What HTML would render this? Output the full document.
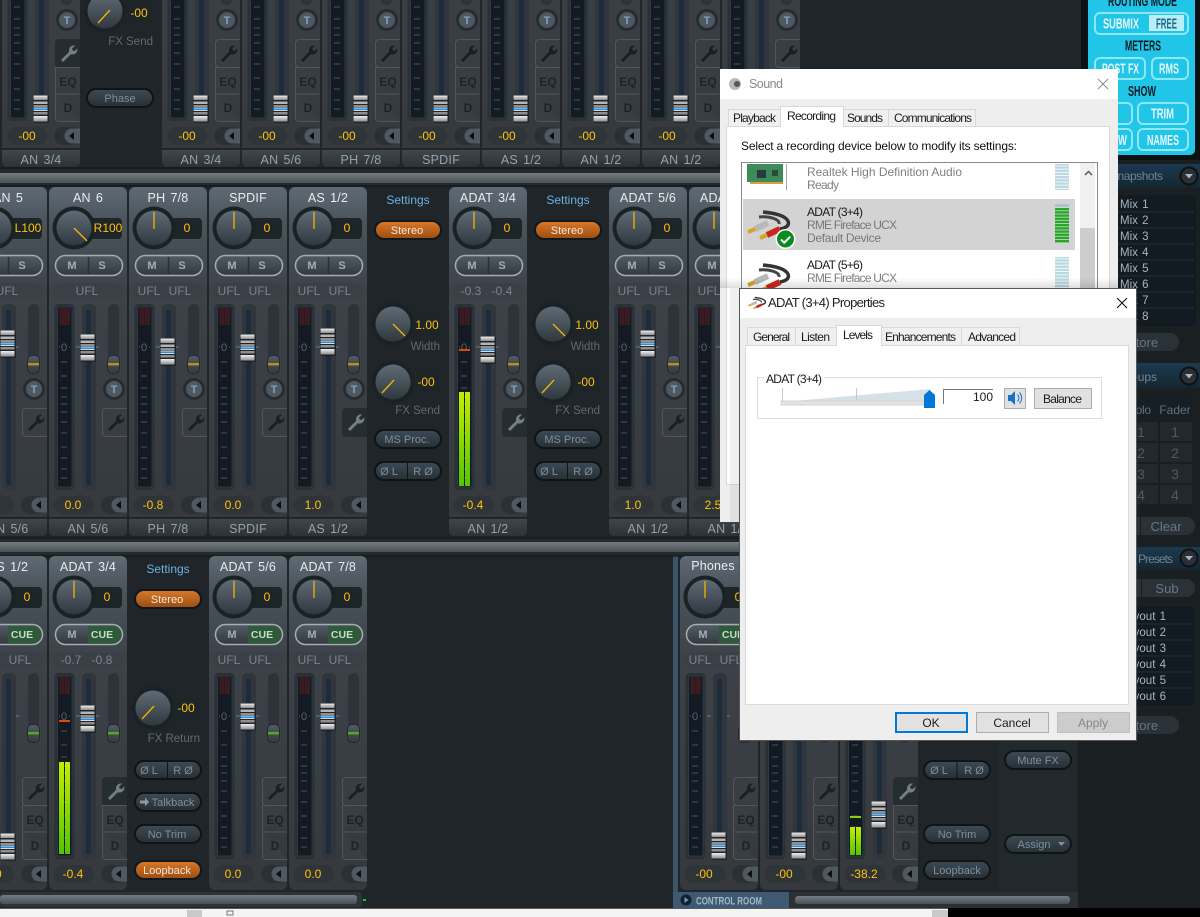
<!DOCTYPE html>
<html><head><meta charset="utf-8"><title>TotalMix</title>
<style>
html,body{margin:0;padding:0;background:#14181b;width:1200px;height:917px;overflow:hidden}
svg{display:block}
text{font-family:"Liberation Sans",sans-serif}
.n{font-size:12.5px;fill:#e8edf0;text-anchor:middle;letter-spacing:.2px;word-spacing:1.5px}
.l{font-size:12.5px;fill:#93a3ad;text-anchor:middle;letter-spacing:.2px;word-spacing:1.5px}
.v{font-size:12px;fill:#ffc30a;text-anchor:middle}
.g{font-size:12px;fill:#77858f;text-anchor:middle}
.m{font-size:11px;fill:#a3aeb5;text-anchor:middle;font-weight:bold}
.c{font-size:10.5px;fill:#c5dcc8;text-anchor:middle;font-weight:bold}
.t{font-size:11px;fill:#80a2bb;text-anchor:middle;font-weight:bold}
.e{font-size:12px;fill:#1e2226;text-anchor:middle;font-weight:bold}
.z{font-size:11px;fill:#55646f;text-anchor:middle}
.p{font-size:11px;fill:#7f8f9b;text-anchor:middle}
.o{font-size:11px;fill:#f2e6da;text-anchor:middle}
.s{font-size:12px;fill:#6cb2de;text-anchor:middle}
.r{font-size:11.5px;fill:#5d6b76;text-anchor:end}
.y{font-weight:bold;font-size:15px;font-family:"Liberation Sans Narrow","Liberation Sans",sans-serif;text-anchor:start}
.k{fill:#0c1d26}.w{fill:#e6f8fc}
.h{font-size:12px;fill:#6f8494}
.i{font-size:11.5px;fill:#a8b5bd;word-spacing:1px}
.u{font-size:14px;fill:#4e5b64;text-anchor:middle}
.d{font-size:12px;fill:#1a1a1a}
.dg{font-size:12px;fill:#808080}
.pb{fill:url(#pg);stroke:#0f1417;stroke-width:2}
.po{fill:url(#po);stroke:#12161a;stroke-width:2}
</style></head><body>
<svg width="1200" height="917" viewBox="0 0 1200 917" xmlns="http://www.w3.org/2000/svg">
<defs>
<linearGradient id="bd" x1="0" y1="0" x2="0" y2="1"><stop offset="0" stop-color="#5f6a74"/><stop offset=".1" stop-color="#4b545c"/><stop offset=".3" stop-color="#3c4248"/><stop offset="1" stop-color="#35393d"/></linearGradient>
<linearGradient id="lb" x1="0" y1="0" x2="0" y2="1"><stop offset="0" stop-color="#40474d"/><stop offset="1" stop-color="#2d3237"/></linearGradient>
<linearGradient id="kf" x1="0" y1="0" x2="0" y2="1"><stop offset="0" stop-color="#5f6b75"/><stop offset="1" stop-color="#30383f"/></linearGradient>
<linearGradient id="pg" x1="0" y1="0" x2="0" y2="1"><stop offset="0" stop-color="#3e4b55"/><stop offset="1" stop-color="#262e34"/></linearGradient>
<linearGradient id="po" x1="0" y1="0" x2="0" y2="1"><stop offset="0" stop-color="#d87a2a"/><stop offset="1" stop-color="#9a4c12"/></linearGradient>
<linearGradient id="mg" x1="0" y1="0" x2="0" y2="1"><stop offset="0" stop-color="#525c65"/><stop offset="1" stop-color="#32393f"/></linearGradient>
<linearGradient id="bar" x1="0" y1="0" x2="0" y2="1"><stop offset="0" stop-color="#c4ee00"/><stop offset="1" stop-color="#56c400"/></linearGradient>
<linearGradient id="hd" x1="0" y1="0" x2="0" y2="1"><stop offset="0" stop-color="#1c3a50"/><stop offset="1" stop-color="#152630"/></linearGradient>
<linearGradient id="sb" x1="0" y1="0" x2="0" y2="1"><stop offset="0" stop-color="#747c81"/><stop offset="1" stop-color="#4a5155"/></linearGradient>
<linearGradient id="sh" x1="0" y1="0" x2="0" y2="1"><stop offset="0" stop-color="#000" stop-opacity="0"/><stop offset="1" stop-color="#000" stop-opacity=".13"/></linearGradient>
<linearGradient id="cp" x1="0" y1="0" x2="0" y2="1"><stop offset="0" stop-color="#f0f0f0"/><stop offset="1" stop-color="#8d8d8d"/></linearGradient>
<pattern id="lv" width="4" height="3.2" patternUnits="userSpaceOnUse"><rect width="4" height="3.2" fill="#fff"/><rect width="4" height="2.4" fill="#b9d8e0"/></pattern>
<pattern id="lg" width="4" height="3.2" patternUnits="userSpaceOnUse"><rect width="4" height="3.2" fill="#d3d3d3"/><rect width="4" height="2.4" fill="#25a825"/></pattern>

<g id="core3">
<rect x="4" y="96" width="70" height="16" rx="8" fill="#3a4046"/>
<rect x="5.5" y="117" width="20" height="186" rx="4" fill="#2b3035"/>
<rect x="8.5" y="120" width="14.5" height="180" rx="2" fill="#131a22" stroke="#263a4a"/>
<rect x="10.5" y="121" width="5" height="17" fill="#3c1b20"/><rect x="16" y="121" width="5" height="17" fill="#3c1b20"/>
<path d="M12 175h6M12 189h6M12 201h6M12 210h6M12 217h6M12 225h6M12 235h6M12 246h6M12 260h6M12 271h6M12 282h6M12 291h6" stroke="#48565f"/>
<path d="M10 160h1M20 160h1" stroke="#55646f"/>
<rect x="33" y="117" width="14" height="186" rx="5" fill="#30363b"/>
<rect x="37" y="123" width="5" height="175" rx="1" fill="#1c2c3c"/>
<path d="M27 160h4M47 160h3" stroke="#6a7c8a"/>
<rect x="59" y="117" width="11" height="70" rx="5" fill="#2d3338"/>
<rect x="5" y="309" width="40" height="18" rx="9" fill="#2f3439"/>
<rect x="52" y="309" width="26" height="18" rx="9" fill="#2b3035"/>
<path d="M78 310.500h-8a7.500 7.500 0 0 0 0 15h8z" fill="#4e5960"/>
<path d="M72 314v8l-5-4z" fill="#0c0e10"/>
</g>
<g id="core"><use href="#core3"/><circle cx="65" cy="202" r="11" fill="#272c31"/><circle cx="65" cy="202" r="8" fill="#4c5862"/></g>
<g id="st">
<rect width="78" height="349" rx="6" fill="url(#bd)"/>
<path d="M0 331H78V343Q78 349 72 349H6Q0 349 0 343Z" fill="url(#lb)"/>
<path d="M0 331H78" stroke="#11161a" stroke-width="1.200"/>
<use href="#core"/>
</g>
<g id="st3">
<rect width="78" height="334" rx="6" fill="url(#bd)"/>
<use href="#core3"/>
</g>
<g id="rk"><rect x="16" y="-10" width="32" height="21" rx="4" fill="#1d2529"/></g>
<g id="kn"><use href="#rk"/><circle r="21.500" fill="#1b2226"/><circle r="17.500" fill="url(#kf)"/></g>
<g id="kd"><use href="#kn"/><path d="M0 -16V1" stroke="#f5b400" stroke-width="1.300"/></g>
<g id="ms"><rect x="6.500" y="68.500" width="67" height="20" rx="10" fill="url(#mg)" stroke="#a5adb2" stroke-width="1.500"/><path d="M39.500 70V87" stroke="#2a3036" stroke-width="1.500"/></g>
<g id="mc"><rect x="6.500" y="68.500" width="67" height="20" rx="10" fill="url(#mg)" stroke="#a5adb2" stroke-width="1.500"/><path d="M39 70H64a8.500 8.500 0 0 1 0 17H39z" fill="#2e5a3b"/></g>
<g id="cap">
<rect x="1" y="1" width="15" height="27" fill="#111" opacity=".5"/>
<rect width="15" height="27" rx="1" fill="#202327"/>
<rect x=".5" y=".5" width="14" height="4.500" fill="url(#cp)"/>
<rect x=".5" y="6.500" width="14" height="2.500" fill="#b5b5b5"/>
<rect x=".5" y="10" width="14" height="2" fill="#8f8f8f"/>
<rect x=".5" y="12.500" width="14" height="1" fill="#ddd"/>
<rect x=".5" y="13.500" width="14" height="1.500" fill="#1e90e8"/>
<rect x=".5" y="15" width="14" height="1" fill="#ddd"/>
<rect x=".5" y="17" width="14" height="2.500" fill="#8f8f8f"/>
<rect x=".5" y="21" width="14" height="5.500" fill="url(#cp)"/>
</g>
<g id="ta"><rect x="58.500" y="168.500" width="12" height="18" rx="4.500" fill="url(#mg)" stroke="#24292e"/><rect x="59" y="176" width="11" height="2.400" fill="#c28c1d"/></g>
<g id="tg"><rect x="58.500" y="168.500" width="12" height="18" rx="4.500" fill="url(#mg)" stroke="#24292e"/><rect x="59" y="176" width="11" height="2.400" fill="#52ad1a"/></g>
<path id="wp" d="M0 15 L8.200 6.800 C7.200 3 10.200 -.2 14 .6 L11 3.600 L11.800 5.600 L13.800 6 L16.300 3.400 C17 7.600 13.500 10.500 9.800 9.200 L2 17 Z"/>
<g id="tw"><path d="M78 221.500H57a3.500 3.500 0 0 0-3.500 3.500V246a3.500 3.500 0 0 0 3.500 3.500H78" fill="#393e43" stroke="#50565b"/><use href="#wp" x="59" y="227" fill="#1b1f23"/></g>
<g id="ts"><path d="M78 221H57a4 4 0 0 0-4 4V246a4 4 0 0 0 4 4H78z" fill="#262d31"/><use href="#wp" x="59" y="227" fill="#6e8088"/></g>
<g id="eq"><path d="M78 249.500H53.500V276M53.500 276H78M78 303.500H57a3.500 3.500 0 0 1-3.500-3.500V276" fill="#393e43" stroke="#50565b"/></g>
<g id="cab">
<path d="M16 1C26 2 38 4 41 10C43 15 38 17 33 18" fill="none" stroke="#333" stroke-width="3.500"/>
<path d="M12 6C22 5 33 8 32 13" fill="none" stroke="#444" stroke-width="3"/>
<path d="M8 18L21 12" stroke="#b8b8b8" stroke-width="6"/><path d="M1 21L8 18" stroke="#d8a520" stroke-width="4"/>
<path d="M20 24L33 18" stroke="#c8281e" stroke-width="6"/><path d="M13 27L20 24" stroke="#d8a520" stroke-width="4"/>
</g>
</defs>

<!-- backdrop -->
<rect width="1200" height="917" fill="#14181b"/>
<rect x="0" y="0" width="1081" height="168" fill="#1f2529"/>
<rect x="0" y="186" width="780" height="352" fill="#1f2529"/>
<rect x="0" y="556" width="1078" height="352" fill="#1f2529"/>
<rect x="673" y="556" width="5" height="336" fill="#3a5468"/>
<!-- row bars -->
<rect x="0" y="168" width="740" height="18" fill="#232a2e"/><rect x="0" y="173" width="740" height="10" fill="url(#sb)"/>
<rect x="0" y="538" width="740" height="18" fill="#232a2e"/><rect x="0" y="542" width="740" height="10" fill="url(#sb)"/>
<path d="M0 168H740M0 186H740M0 538H740M0 556H740" stroke="#0f1316"/>

<!-- ROW 1 -->
<g transform="translate(2,-182)"><use href="#st"/><use href="#cap" x="31" y="277"/><use href="#ts"/><use href="#eq"/><text class="t" x="65" y="206">T</text><text class="e" x="66" y="268">EQ</text><text class="e" x="66" y="294">D</text><text class="v" x="25" y="322">-00</text><text class="l" x="39" y="346">AN 3/4</text></g>
<g transform="translate(162,-182)"><use href="#st"/><use href="#cap" x="31" y="277"/><use href="#tw"/><use href="#eq"/><text class="t" x="65" y="206">T</text><text class="e" x="66" y="268">EQ</text><text class="e" x="66" y="294">D</text><text class="v" x="25" y="322">-00</text><text class="l" x="39" y="346">AN 3/4</text></g>
<g transform="translate(242,-182)"><use href="#st"/><use href="#cap" x="31" y="277"/><use href="#tw"/><use href="#eq"/><text class="t" x="65" y="206">T</text><text class="e" x="66" y="268">EQ</text><text class="e" x="66" y="294">D</text><text class="v" x="25" y="322">-00</text><text class="l" x="39" y="346">AN 5/6</text></g>
<g transform="translate(322,-182)"><use href="#st"/><use href="#cap" x="31" y="277"/><use href="#tw"/><use href="#eq"/><text class="t" x="65" y="206">T</text><text class="e" x="66" y="268">EQ</text><text class="e" x="66" y="294">D</text><text class="v" x="25" y="322">-00</text><text class="l" x="39" y="346">PH 7/8</text></g>
<g transform="translate(402,-182)"><use href="#st"/><use href="#cap" x="31" y="277"/><use href="#tw"/><use href="#eq"/><text class="t" x="65" y="206">T</text><text class="e" x="66" y="268">EQ</text><text class="e" x="66" y="294">D</text><text class="v" x="25" y="322">-00</text><text class="l" x="39" y="346">SPDIF</text></g>
<g transform="translate(482,-182)"><use href="#st"/><use href="#cap" x="31" y="277"/><use href="#tw"/><use href="#eq"/><text class="t" x="65" y="206">T</text><text class="e" x="66" y="268">EQ</text><text class="e" x="66" y="294">D</text><text class="v" x="25" y="322">-00</text><text class="l" x="39" y="346">AS 1/2</text></g>
<g transform="translate(562,-182)"><use href="#st"/><use href="#cap" x="31" y="277"/><use href="#tw"/><use href="#eq"/><text class="t" x="65" y="206">T</text><text class="e" x="66" y="268">EQ</text><text class="e" x="66" y="294">D</text><text class="v" x="25" y="322">-00</text><text class="l" x="39" y="346">AN 1/2</text></g>
<g transform="translate(642,-182)"><use href="#st"/><use href="#cap" x="31" y="277"/><use href="#tw"/><use href="#eq"/><text class="t" x="65" y="206">T</text><text class="e" x="66" y="268">EQ</text><text class="e" x="66" y="294">D</text><text class="v" x="25" y="322">-00</text><text class="l" x="39" y="346">AN 1/2</text></g>
<g transform="translate(722,-182)"><use href="#st"/><use href="#tw"/><text class="t" x="65" y="206">T</text></g>
<!-- row1 settings -->
<g transform="translate(105,11)"><use href="#kn"/><path d="M-7 12L5 -1" stroke="#f5b400" stroke-width="1.300"/><text class="v" x="34" y="6">-00</text></g>
<text class="r" x="153" y="45">FX Send</text>
<rect class="pb" x="87" y="89" width="66" height="18" rx="9"/><text class="p" x="120" y="102">Phase</text>

<!-- ROW 2 -->
<g transform="translate(-31,187)"><use href="#st"/><use href="#kn" x="25" y="41"/><text class="v" x="59" y="45">L100</text><use href="#ms"/><text class="m" x="53" y="82">S</text><text class="g" x="38" y="108">UFL</text><use href="#cap" x="31" y="143"/><use href="#ta"/><use href="#tw"/><text class="t" x="65" y="206">T</text><text class="l" x="39" y="346">AN 5/6</text></g>
<g transform="translate(49,187)"><use href="#st"/><use href="#kn" x="25" y="41"/><path d="M25 41L38 54" stroke="#f5b400" stroke-width="1.300"/><text class="v" x="59" y="45">R100</text><use href="#ms"/><text class="m" x="23" y="82">M</text><text class="m" x="53" y="82">S</text><text class="g" x="38" y="108">UFL</text><path d="M15.500 121h1v17h-1z" fill="#3c1b20"/><text class="z" x="15" y="164">0</text><use href="#cap" x="31" y="147"/><use href="#ta"/><use href="#tw"/><text class="t" x="65" y="206">T</text><text class="v" x="24" y="322">0.0</text><text class="l" x="39" y="346">AN 5/6</text></g>
<g transform="translate(129,187)"><use href="#st"/><use href="#kd" x="25" y="41"/><text class="v" x="58" y="45">0</text><use href="#ms"/><text class="m" x="23" y="82">M</text><text class="m" x="53" y="82">S</text><text class="g" x="20" y="108">UFL</text><text class="g" x="51" y="108">UFL</text><text class="z" x="15" y="164">0</text><use href="#cap" x="31" y="151"/><use href="#ta"/><use href="#tw"/><text class="t" x="65" y="206">T</text><text class="v" x="24" y="322">-0.8</text><text class="l" x="39" y="346">PH 7/8</text></g>
<g transform="translate(209,187)"><use href="#st"/><use href="#kd" x="25" y="41"/><text class="v" x="58" y="45">0</text><use href="#ms"/><text class="m" x="23" y="82">M</text><text class="m" x="53" y="82">S</text><text class="g" x="20" y="108">UFL</text><text class="g" x="51" y="108">UFL</text><text class="z" x="15" y="164">0</text><use href="#cap" x="31" y="147"/><use href="#ta"/><use href="#tw"/><text class="t" x="65" y="206">T</text><text class="v" x="24" y="322">0.0</text><text class="l" x="39" y="346">SPDIF</text></g>
<g transform="translate(289,187)"><use href="#st"/><use href="#kd" x="25" y="41"/><text class="v" x="58" y="45">0</text><use href="#ms"/><text class="m" x="23" y="82">M</text><text class="m" x="53" y="82">S</text><text class="g" x="20" y="108">UFL</text><text class="g" x="51" y="108">UFL</text><text class="z" x="15" y="164">0</text><use href="#cap" x="31" y="141"/><use href="#ta"/><use href="#ts"/><text class="t" x="65" y="206">T</text><text class="v" x="24" y="322">1.0</text><text class="l" x="39" y="346">AS 1/2</text></g>
<g transform="translate(449,187)"><use href="#st"/><use href="#kd" x="25" y="41"/><text class="v" x="58" y="45">0</text><use href="#ms"/><text class="m" x="23" y="82">M</text><text class="m" x="53" y="82">S</text><text class="g" x="22" y="108">-0.3</text><text class="g" x="53" y="108">-0.4</text><text class="z" x="15" y="164">0</text><rect x="10" y="162" width="11" height="2" fill="#e04a12"/><rect x="10" y="205" width="5" height="94" fill="url(#bar)"/><rect x="16" y="205" width="5" height="94" fill="url(#bar)"/><use href="#cap" x="31" y="149"/><use href="#ta"/><use href="#ts"/><text class="t" x="65" y="206">T</text><text class="v" x="24" y="322">-0.4</text><text class="l" x="39" y="346">AN 1/2</text></g>
<g transform="translate(609,187)"><use href="#st"/><use href="#kd" x="25" y="41"/><text class="v" x="58" y="45">0</text><use href="#ms"/><text class="m" x="23" y="82">M</text><text class="m" x="53" y="82">S</text><text class="g" x="20" y="108">UFL</text><text class="g" x="51" y="108">UFL</text><text class="z" x="15" y="164">0</text><use href="#cap" x="31" y="143"/><use href="#ta"/><use href="#tw"/><text class="t" x="65" y="206">T</text><text class="v" x="24" y="322">1.0</text><text class="l" x="39" y="346">AN 1/2</text></g>
<g transform="translate(689,187)"><use href="#st"/><use href="#kd" x="25" y="41"/><text class="n" x="39" y="15">ADAT 7/8</text><use href="#ms"/><text class="m" x="23" y="82">M</text><text class="g" x="20" y="108">UFL</text><text class="z" x="15" y="164">0</text><text class="v" x="24" y="322">2.5</text><text class="l" x="39" y="346">AN 1/2</text></g>
<text class="n" x="8" y="202">AN 5</text><text class="n" x="88" y="202">AN 6</text><text class="n" x="168" y="202">PH 7/8</text><text class="n" x="248" y="202">SPDIF</text><text class="n" x="328" y="202">AS 1/2</text><text class="n" x="488" y="202">ADAT 3/4</text><text class="n" x="648" y="202">ADAT 5/6</text>
<!-- row 2 settings -->
<g transform="translate(369,187)"><text class="s" x="39" y="17">Settings</text><rect class="po" x="6" y="34" width="66" height="18" rx="9"/><text class="o" x="38" y="47">Stereo</text><use href="#kn" x="24" y="137"/><path d="M24 137L36 149" stroke="#f5b400" stroke-width="1.300"/><text class="v" x="58" y="142">1.00</text><text class="r" x="71" y="163">Width</text><use href="#kn" x="24" y="195"/><path d="M13 206L25 193" stroke="#f5b400" stroke-width="1.300"/><text class="v" x="57" y="199">-00</text><text class="r" x="71" y="227">FX Send</text><rect class="pb" x="6" y="243" width="66" height="18" rx="9"/><text class="p" x="38" y="256">MS Proc.</text><rect class="pb" x="6" y="275" width="66" height="18" rx="9"/><path d="M38.500 275V293" stroke="#0f1417"/><text class="p" x="20" y="288">Ø L</text><text class="p" x="54" y="288">R Ø</text></g>
<g transform="translate(529,187)"><text class="s" x="39" y="17">Settings</text><rect class="po" x="6" y="34" width="66" height="18" rx="9"/><text class="o" x="38" y="47">Stereo</text><use href="#kn" x="24" y="137"/><path d="M24 137L36 149" stroke="#f5b400" stroke-width="1.300"/><text class="v" x="58" y="142">1.00</text><text class="r" x="71" y="163">Width</text><use href="#kn" x="24" y="195"/><path d="M13 206L25 193" stroke="#f5b400" stroke-width="1.300"/><text class="v" x="57" y="199">-00</text><text class="r" x="71" y="227">FX Send</text><rect class="pb" x="6" y="243" width="66" height="18" rx="9"/><text class="p" x="38" y="256">MS Proc.</text><rect class="pb" x="6" y="275" width="66" height="18" rx="9"/><path d="M38.500 275V293" stroke="#0f1417"/><text class="p" x="20" y="288">Ø L</text><text class="p" x="54" y="288">R Ø</text></g>

<!-- ROW 3 -->
<g transform="translate(-31,556)"><use href="#st3"/><use href="#kd" x="25" y="41"/><text class="v" x="58" y="45">0</text><use href="#mc"/><text class="c" x="53" y="82">CUE</text><text class="g" x="20" y="108">UFL</text><text class="g" x="51" y="108">UFL</text><use href="#cap" x="31" y="277"/><use href="#tg"/><use href="#tw"/><use href="#eq"/><text class="e" x="66" y="268">EQ</text><text class="e" x="66" y="294">D</text><text class="n" x="39" y="15">AS 1/2</text><text class="v" x="24" y="322">-00</text></g>
<g transform="translate(49,556)"><use href="#st3"/><use href="#kd" x="25" y="41"/><text class="v" x="58" y="45">0</text><use href="#mc"/><text class="m" x="23" y="82">M</text><text class="c" x="53" y="82">CUE</text><text class="g" x="22" y="108">-0.7</text><text class="g" x="53" y="108">-0.8</text><text class="z" x="15" y="164">0</text><rect x="10" y="164" width="11" height="2" fill="#e04a12"/><rect x="10" y="206" width="5" height="92" fill="url(#bar)"/><rect x="16" y="206" width="5" height="92" fill="url(#bar)"/><use href="#cap" x="31" y="149"/><use href="#tg"/><use href="#ts"/><use href="#eq"/><text class="e" x="66" y="268">EQ</text><text class="e" x="66" y="294">D</text><text class="n" x="39" y="15">ADAT 3/4</text><text class="v" x="24" y="322">-0.4</text></g>
<g transform="translate(209,556)"><use href="#st3"/><use href="#kd" x="25" y="41"/><text class="v" x="58" y="45">0</text><use href="#mc"/><text class="m" x="23" y="82">M</text><text class="c" x="53" y="82">CUE</text><text class="g" x="20" y="108">UFL</text><text class="g" x="51" y="108">UFL</text><text class="z" x="15" y="164">0</text><use href="#cap" x="31" y="147"/><use href="#tg"/><use href="#tw"/><use href="#eq"/><text class="e" x="66" y="268">EQ</text><text class="e" x="66" y="294">D</text><text class="n" x="39" y="15">ADAT 5/6</text><text class="v" x="24" y="322">0.0</text></g>
<g transform="translate(289,556)"><use href="#st3"/><use href="#kd" x="25" y="41"/><text class="v" x="58" y="45">0</text><use href="#mc"/><text class="m" x="23" y="82">M</text><text class="c" x="53" y="82">CUE</text><text class="g" x="20" y="108">UFL</text><text class="g" x="51" y="108">UFL</text><text class="z" x="15" y="164">0</text><use href="#cap" x="31" y="147"/><use href="#tg"/><use href="#tw"/><use href="#eq"/><text class="e" x="66" y="268">EQ</text><text class="e" x="66" y="294">D</text><text class="n" x="39" y="15">ADAT 7/8</text><text class="v" x="24" y="322">0.0</text></g>
<!-- row 3 settings -->
<g transform="translate(129,556)"><text class="s" x="39" y="17">Settings</text><rect class="po" x="6" y="34" width="66" height="18" rx="9"/><text class="o" x="38" y="47">Stereo</text><use href="#kn" x="24" y="152"/><path d="M13 163L25 150" stroke="#f5b400" stroke-width="1.300"/><text class="v" x="57" y="156">-00</text><text class="r" x="71" y="186">FX Return</text><rect class="pb" x="6" y="205" width="66" height="18" rx="9"/><path d="M38.500 205V223" stroke="#0f1417"/><text class="p" x="20" y="218">Ø L</text><text class="p" x="54" y="218">R Ø</text><rect class="pb" x="6" y="237" width="66" height="18" rx="9"/><path d="M11 244.500h5v-3l4 4.500-4 4.500v-3h-5z" fill="#8c9ba6"/><text class="p" x="44" y="250">Talkback</text><rect class="pb" x="6" y="269" width="66" height="18" rx="9"/><text class="p" x="38" y="282">No Trim</text><rect class="po" x="6" y="305" width="66" height="18" rx="9"/><text class="o" x="38" y="318">Loopback</text></g>
<!-- control room -->
<g transform="translate(680,556)"><use href="#st3"/><use href="#kd" x="25" y="41"/><text class="v" x="58" y="45">0</text><use href="#mc"/><text class="m" x="23" y="82">M</text><text class="c" x="53" y="82">CUE</text><text class="g" x="20" y="108">UFL</text><text class="g" x="51" y="108">UFL</text><text class="z" x="15" y="164">0</text><use href="#cap" x="31" y="276"/><use href="#tg"/><use href="#tw"/><use href="#eq"/><text class="e" x="66" y="268">EQ</text><text class="e" x="66" y="294">D</text><text class="n" x="33" y="14">Phones</text><text class="v" x="24" y="322">-00</text></g>
<g transform="translate(760,556)"><use href="#st3"/><use href="#cap" x="31" y="276"/><use href="#tw"/><use href="#eq"/><text class="e" x="66" y="268">EQ</text><text class="e" x="66" y="294">D</text><text class="v" x="24" y="322">-00</text></g>
<g transform="translate(840,556)"><use href="#st3"/><rect x="10" y="260" width="11" height="2" fill="#8ed000"/><rect x="10" y="271" width="5" height="28" fill="url(#bar)"/><rect x="16" y="271" width="5" height="28" fill="url(#bar)"/><use href="#cap" x="31" y="245"/><use href="#ts"/><use href="#eq"/><text class="e" x="66" y="268">EQ</text><text class="e" x="66" y="294">D</text><text class="v" x="24" y="322">-38.2</text></g>
<g transform="translate(914,556)"><rect class="pb" x="10" y="205" width="66" height="18" rx="9"/><path d="M43 205V223" stroke="#0f1417"/><text class="p" x="25" y="218">Ø L</text><text class="p" x="60" y="218">R Ø</text><rect class="pb" x="10" y="269" width="66" height="18" rx="9"/><text class="p" x="43" y="282">No Trim</text><rect class="pb" x="10" y="305" width="66" height="18" rx="9"/><text class="p" x="43" y="318">Loopback</text></g>
<rect x="998" y="556" width="79" height="336" rx="6" fill="#22292d"/>
<rect class="pb" x="1005" y="751" width="66" height="18" rx="9"/><text class="p" x="1038" y="764">Mute FX</text>
<rect class="pb" x="1005" y="835" width="66" height="18" rx="9"/><text class="p" x="1034" y="848">Assign</text><path d="M1058 842h7l-3.500 4z" fill="#7f8f9b"/>

<!-- bottom bars -->
<rect x="0" y="892" width="362" height="15" rx="3" fill="#2d3438"/>
<rect x="0" y="895" width="357" height="9" rx="3" fill="url(#sb)"/>
<rect x="363" y="899" width="3" height="2" fill="#23c323"/>
<rect x="673" y="892" width="116" height="16" fill="#3d5a72"/>
<rect x="789" y="892" width="289" height="16" fill="#2a3034"/>
<circle cx="686" cy="900" r="5.500" fill="#0f2230"/><path d="M684.500 897v6l4-3z" fill="#7c97aa"/>
<text x="696" y="904.500" textLength="66" lengthAdjust="spacingAndGlyphs" style="font:bold 11px 'Liberation Sans Narrow','Liberation Sans',sans-serif;fill:#a5b8c5">CONTROL ROOM</text>
<rect x="795" y="896" width="275" height="8" rx="3" fill="url(#sb)"/>

<!-- page bottom -->
<rect x="0" y="908" width="948" height="9" fill="#f4f4f4"/>
<rect x="0" y="908" width="948" height="1" fill="#5a5a5a"/>
<rect x="187" y="910" width="15" height="7" fill="#c9c9c9"/>
<rect x="932" y="910" width="16" height="7" fill="#c9c9c9"/>
<path d="M227 911h6v4h-6z" fill="none" stroke="#777"/>
<rect x="948" y="908" width="252" height="9" fill="#000"/>

<!-- RIGHT PANEL -->
<rect x="1078" y="160" width="122" height="748" fill="#1a1f22"/>
<rect x="1081" y="0" width="119" height="160" fill="#0e1114"/>
<rect x="1088" y="-6" width="107" height="161" rx="5" fill="#20c5e8"/>
<text class="y k" x="1108" y="6" textLength="69" lengthAdjust="spacingAndGlyphs">ROUTING MODE</text>
<rect x="1095" y="13" width="93" height="21" rx="5" fill="none" stroke="#8de7f6" stroke-width="2"/>
<rect x="1149" y="15" width="35" height="16" fill="#b9eef9"/>
<text class="y w" x="1103" y="28.500" textLength="36" lengthAdjust="spacingAndGlyphs">SUBMIX</text>
<text class="y" x="1156" y="28.500" textLength="21" lengthAdjust="spacingAndGlyphs" style="fill:#1a6a8a">FREE</text>
<text class="y k" x="1125" y="50.500" textLength="36" lengthAdjust="spacingAndGlyphs">METERS</text>
<rect x="1095" y="58" width="50" height="21" rx="5" fill="none" stroke="#8de7f6" stroke-width="2"/>
<text class="y w" x="1102" y="73.500" textLength="37" lengthAdjust="spacingAndGlyphs">POST FX</text>
<rect x="1152" y="58" width="36" height="21" rx="5" fill="none" stroke="#8de7f6" stroke-width="2"/>
<text class="y w" x="1159" y="73.500" textLength="20" lengthAdjust="spacingAndGlyphs">RMS</text>
<text class="y k" x="1128" y="96" textLength="28" lengthAdjust="spacingAndGlyphs">SHOW</text>
<rect x="1095" y="103" width="37" height="21" rx="5" fill="none" stroke="#8de7f6" stroke-width="2"/>
<rect x="1138" y="103" width="50" height="21" rx="5" fill="none" stroke="#8de7f6" stroke-width="2"/>
<text class="y w" x="1151" y="118.500" textLength="23" lengthAdjust="spacingAndGlyphs">TRIM</text>
<rect x="1095" y="129" width="37" height="21" rx="5" fill="none" stroke="#8de7f6" stroke-width="2"/>
<text class="y w" x="1118" y="145" textLength="9" lengthAdjust="spacingAndGlyphs">W</text>
<rect x="1138" y="129" width="50" height="21" rx="5" fill="none" stroke="#8de7f6" stroke-width="2"/>
<text class="y w" x="1147" y="145" textLength="32" lengthAdjust="spacingAndGlyphs">NAMES</text>

<rect x="1080" y="164" width="120" height="24" fill="url(#hd)"/>
<text class="h" x="1110" y="180" textLength="53">Snapshots</text>
<circle cx="1189" cy="176" r="8.500" fill="#2a3035" stroke="#0e1114" stroke-width="2"/><path d="M1185 174h8l-4 4.500z" fill="#aab4ba"/>
<rect x="1090" y="195" width="106" height="132" rx="5" fill="#111b21"/>
<path d="M1092 212H1194M1092 228H1194M1092 244H1194M1092 260H1194M1092 276H1194M1092 292H1194M1092 308H1194" stroke="#252f36"/>
<text class="i" x="1120" y="208">Mix 1</text><text class="i" x="1120" y="224">Mix 2</text><text class="i" x="1120" y="240">Mix 3</text><text class="i" x="1120" y="256">Mix 4</text><text class="i" x="1120" y="272">Mix 5</text><text class="i" x="1120" y="288">Mix 6</text><text class="i" x="1120" y="304">Mix 7</text><text class="i" x="1120" y="320">Mix 8</text>
<rect x="1094" y="333" width="85" height="18" rx="9" fill="#2b3237"/>
<text x="1127" y="347" style="font-size:13px;fill:#667784">Store</text>

<rect x="1080" y="363" width="120" height="25" fill="url(#hd)"/>
<text class="h" x="1118" y="381" textLength="39">Groups</text>
<circle cx="1189" cy="376" r="8.500" fill="#2a3035" stroke="#0e1114" stroke-width="2"/><path d="M1185 374h8l-4 4.500z" fill="#aab4ba"/>
<rect x="1090" y="397" width="104" height="110" rx="4" fill="#171f24"/>
<text class="h" x="1128" y="414" textLength="23" style="fill:#5f7280">Solo</text><text class="h" x="1175" y="414" text-anchor="middle" style="fill:#5f7280">Fader</text>
<rect x="1125" y="422" width="33" height="19" fill="#22282c"/><rect x="1160" y="422" width="32" height="19" fill="#22282c"/><rect x="1125" y="443" width="33" height="19" fill="#22282c"/><rect x="1160" y="443" width="32" height="19" fill="#22282c"/><rect x="1125" y="464" width="33" height="19" fill="#22282c"/><rect x="1160" y="464" width="32" height="19" fill="#22282c"/><rect x="1125" y="485" width="33" height="19" fill="#22282c"/><rect x="1160" y="485" width="32" height="19" fill="#22282c"/>
<text class="u" x="1141" y="437">1</text><text class="u" x="1175" y="437">1</text><text class="u" x="1141" y="458">2</text><text class="u" x="1175" y="458">2</text><text class="u" x="1141" y="479">3</text><text class="u" x="1175" y="479">3</text><text class="u" x="1141" y="500">4</text><text class="u" x="1175" y="500">4</text>
<rect x="1094" y="517" width="101" height="18" rx="9" fill="#2b3237"/><path d="M1140.500 517V535" stroke="#171c1f"/>
<text x="1166" y="531" text-anchor="middle" style="font-size:13px;fill:#667784">Clear</text>

<rect x="1080" y="547" width="120" height="23" fill="url(#hd)"/>
<text class="h" x="1138" y="563" textLength="35">Presets</text>
<circle cx="1189" cy="558" r="8.500" fill="#2a3035" stroke="#0e1114" stroke-width="2"/><path d="M1185 556h8l-4 4.500z" fill="#aab4ba"/>
<rect x="1094" y="579" width="101" height="18" rx="9" fill="#2b3237"/><path d="M1141.500 579V597" stroke="#171c1f"/>
<text x="1167" y="593" text-anchor="middle" style="font-size:13px;fill:#667784">Sub</text>
<rect x="1090" y="607" width="105" height="98" rx="5" fill="#111b21"/>
<path d="M1092 624H1193M1092 640H1193M1092 656H1193M1092 672H1193M1092 688H1193" stroke="#252f36"/>
<text class="i" x="1166" y="620" text-anchor="end">Layout 1</text><text class="i" x="1166" y="636" text-anchor="end">Layout 2</text><text class="i" x="1166" y="652" text-anchor="end">Layout 3</text><text class="i" x="1166" y="668" text-anchor="end">Layout 4</text><text class="i" x="1166" y="684" text-anchor="end">Layout 5</text><text class="i" x="1166" y="700" text-anchor="end">Layout 6</text>
<rect x="1094" y="716" width="85" height="18" rx="9" fill="#2b3237"/>
<text x="1127" y="730" style="font-size:13px;fill:#667784">Store</text>

<!-- SOUND DIALOG -->
<rect x="720" y="69" width="398" height="453" fill="#eeeeee"/>
<rect x="720" y="69" width="398" height="30" fill="#fff"/>
<circle cx="735" cy="84" r="6" fill="#b8b8b8"/><circle cx="737" cy="84" r="3" fill="#555"/>
<text x="749" y="88" style="font-size:12.5px;fill:#8a8a8a" textLength="34">Sound</text>
<path d="M1098 79L1108 89M1108 79L1098 89" stroke="#8a8a8a" stroke-width="1"/>
<rect x="726.500" y="126.500" width="383" height="358" fill="#fff" stroke="#d9d9d9"/>
<rect x="728.500" y="109.500" width="52" height="17" fill="#f0f0f0" stroke="#d9d9d9"/><text class="d" x="733" y="122" textLength="43">Playback</text>
<rect x="843.500" y="109.500" width="45" height="17" fill="#f0f0f0" stroke="#d9d9d9"/><text class="d" x="847" y="122" textLength="36">Sounds</text>
<rect x="888.500" y="109.500" width="87" height="17" fill="#f0f0f0" stroke="#d9d9d9"/><text class="d" x="894" y="122" textLength="78">Communications</text>
<path d="M780.500 127V106.500H843.500V127" fill="#fff" stroke="#d9d9d9"/><text class="d" x="787" y="120" textLength="49">Recording</text>
<text class="d" x="741" y="150" textLength="276" style="fill:#111">Select a recording device below to modify its settings:</text>
<rect x="741.500" y="162.500" width="356" height="180" fill="#fff" stroke="#8a8a8a"/>
<rect x="1080" y="163" width="15" height="130" fill="#f0f0f0"/>
<rect x="1080" y="228" width="15" height="70" fill="#cdcdcd"/>
<path d="M1085 175l3.500-3.500 3.500 3.500" fill="none" stroke="#555" stroke-width="1.500"/>
<rect x="747" y="164" width="36" height="18" fill="#3d8a5a"/>
<rect x="757" y="170" width="9" height="8" fill="#2a3a3a"/><rect x="772" y="170" width="6" height="6" fill="#2a4a3a"/>
<rect x="750" y="182" width="33" height="2" fill="#d8a040"/><rect x="786" y="164" width="1" height="26" fill="#9aa"/>
<text class="dg" x="807" y="176" textLength="155">Realtek High Definition Audio</text>
<text class="dg" x="807" y="189" textLength="32">Ready</text>
<rect x="1055" y="164" width="14" height="26" fill="url(#lv)"/>
<rect x="743" y="199" width="332" height="51" fill="#d3d3d3"/>
<use href="#cab" x="747" y="211"/>
<circle cx="785.500" cy="239" r="10" fill="#fff"/><circle cx="785.500" cy="239" r="8.500" fill="#0d8a1f"/>
<path d="M781 239.500l3.200 3.200 6-6" fill="none" stroke="#fff" stroke-width="2"/>
<text class="d" x="807" y="216" textLength="56">ADAT (3+4)</text>
<text class="dg" x="807" y="229" textLength="90" style="fill:#777">RME Fireface UCX</text>
<text class="dg" x="807" y="242" textLength="74" style="fill:#777">Default Device</text>
<rect x="1055" y="204" width="14" height="3" fill="#a8c4cc"/>
<rect x="1055" y="208" width="14" height="35" fill="url(#lg)"/>
<use href="#cab" x="747" y="264"/>
<text class="d" x="807" y="269" textLength="56">ADAT (5+6)</text>
<text class="dg" x="807" y="282" textLength="90">RME Fireface UCX</text>
<rect x="1055" y="257" width="14" height="31" fill="url(#lv)"/>
<rect x="720" y="278" width="398" height="10" fill="url(#sh)"/>
<rect x="730" y="288" width="9" height="234" fill="#000" opacity=".06"/>

<!-- PROPERTIES DIALOG -->
<rect x="739" y="288" width="398" height="453" fill="#555"/>
<rect x="740" y="289" width="396" height="451" fill="#eeeeee"/>
<rect x="740" y="289" width="396" height="29" fill="#fff"/>
<use href="#cab" transform="translate(748,297) scale(.42)"/>
<text x="768" y="307" style="font-size:13px;fill:#222" textLength="117">ADAT (3+4) Properties</text>
<path d="M1117 298L1127 308M1127 298L1117 308" stroke="#111" stroke-width="1.100"/>
<rect x="745.500" y="345.500" width="383" height="359" fill="#fff" stroke="#d9d9d9"/>
<rect x="747.500" y="327.500" width="48" height="18" fill="#f0f0f0" stroke="#d9d9d9"/><text class="d" x="753" y="341" textLength="37">General</text>
<rect x="795.500" y="327.500" width="41" height="18" fill="#f0f0f0" stroke="#d9d9d9"/><text class="d" x="801" y="341" textLength="29">Listen</text>
<rect x="881.500" y="327.500" width="80" height="18" fill="#f0f0f0" stroke="#d9d9d9"/><text class="d" x="885" y="341" textLength="71">Enhancements</text>
<rect x="961.500" y="327.500" width="58" height="18" fill="#f0f0f0" stroke="#d9d9d9"/><text class="d" x="968" y="341" textLength="48">Advanced</text>
<path d="M836.500 346V325.500H881.500V346" fill="#fff" stroke="#d9d9d9"/><text class="d" x="843" y="339" textLength="30">Levels</text>
<rect x="757.500" y="377.500" width="344" height="41" fill="#fff" stroke="#dcdcdc"/>
<rect x="764" y="373" width="60" height="10" fill="#fff"/>
<text class="d" x="766" y="383" textLength="56">ADAT (3+4)</text>
<path d="M782 402L930 389V402Z" fill="#d6e0e7"/>
<path d="M782.500 388V402M856.500 388V402" stroke="#c8c8c8"/>
<rect x="781" y="401" width="148" height="4" fill="#e3e3e3" stroke="#d3d3d3"/>
<path d="M924 395L929.500 390L935 395V408H924Z" fill="#0078d7"/>
<path d="M943.500 404V389.500H993" fill="none" stroke="#777"/>
<text class="d" x="993" y="401" text-anchor="end">100</text>
<rect x="1004.500" y="388.500" width="21" height="20" fill="#e1e1e1" stroke="#adadad"/>
<path d="M1008 395h3l4-4v14l-4-4h-3z" fill="#1a70c8"/><path d="M1017.500 394.500a5 5 0 0 1 0 7M1019.500 392.500a8 8 0 0 1 0 11" fill="none" stroke="#1a70c8"/>
<rect x="1034.500" y="388.500" width="57" height="20" fill="#e1e1e1" stroke="#adadad"/>
<text class="d" x="1043" y="403" textLength="39">Balance</text>
<rect x="896" y="713" width="71" height="19" fill="#e1e1e1" stroke="#0078d7" stroke-width="2"/>
<text class="d" x="931" y="727" text-anchor="middle">OK</text>
<rect x="976.500" y="712.500" width="72" height="20" fill="#e1e1e1" stroke="#adadad"/>
<text class="d" x="1012" y="727" text-anchor="middle">Cancel</text>
<rect x="1057.500" y="712.500" width="72" height="20" fill="#cccccc" stroke="#bfbfbf"/>
<text class="d" x="1093" y="727" text-anchor="middle" style="fill:#888">Apply</text>
</svg>
</body></html>
